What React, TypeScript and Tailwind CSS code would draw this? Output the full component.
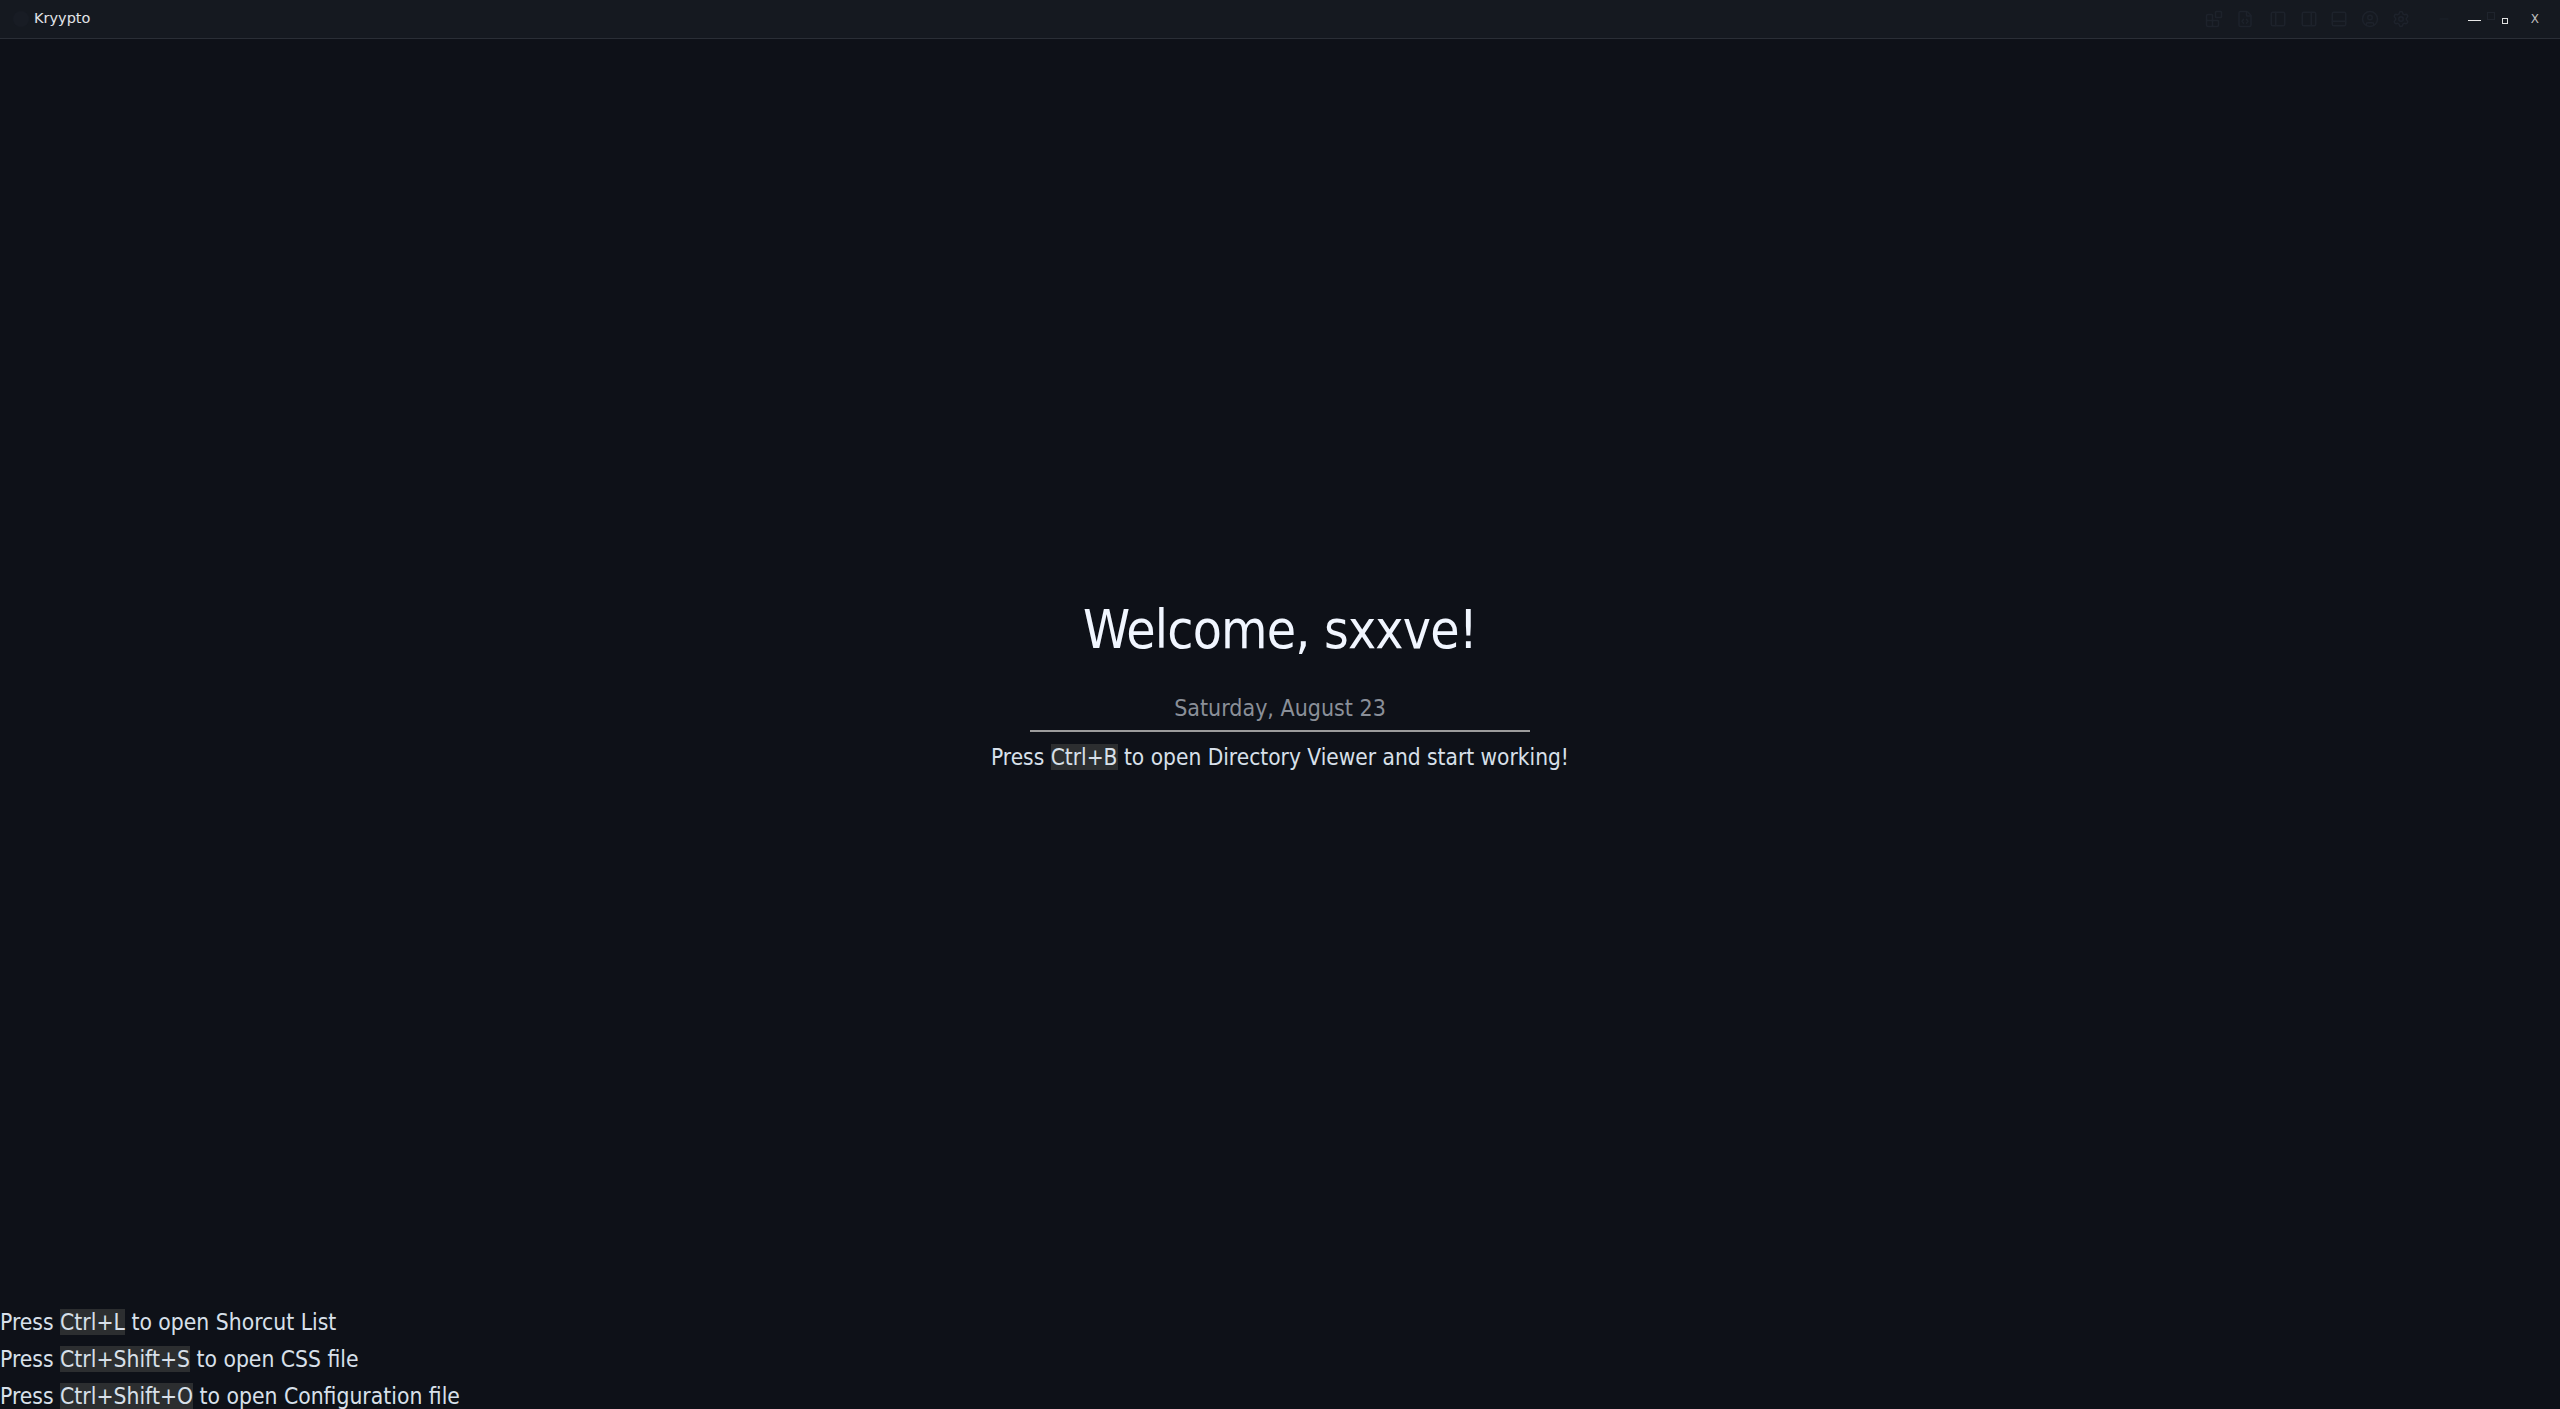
import React from "react";
import { CircleUser, Settings, Minus, Blocks, FileCode, PanelLeft, PanelRight, PanelBottom } from "lucide-react";

const font = "font-['DejaVu_Sans',sans-serif] font-stretch-condensed";

function Key({ children }: { children: React.ReactNode }) {
  return <span className="bg-[#2c2e30]">{children}</span>;
}

export default function App() {
  return (
    <div className={`w-[2560px] h-[1409px] bg-[#0e1118] flex flex-col overflow-hidden ${font}`}>
      <div className="h-[39px] bg-[#151920] border-b border-[#2a2e36] flex items-center shrink-0">
        <div className="w-[16px] h-[16px] ml-[13px] rounded-full bg-[#181c24]" />
        <span className="ml-[5px] text-[14.5px] text-[#e2e4e8] font-stretch-normal">Kryypto</span>
        <div className="flex-1" />
        <div className="flex items-center text-[#1d222b]">
          <Blocks size={18} className="mr-[13px]" />
          <FileCode size={18} className="mr-[15px]" />
          <PanelLeft size={18} className="mr-[13px]" />
          <PanelRight size={18} className="mr-[12px]" />
          <PanelBottom size={18} className="mr-[13px]" />
          <CircleUser size={18} className="mr-[13px]" />
          <Settings size={18} className="mr-[27px]" />
          <Minus size={14} className="mr-[17px]" />
        </div>
        <div className="flex items-center">
          <div className="w-[13px] h-[1px] bg-[#e8e8e8] mr-[6px] mt-[2px]" />
          <div className="w-[8px] h-[8px] border border-[#1f242d] mr-[7px] mb-[6px]" />
          <div className="w-[6px] h-[6px] border border-[#e0e0e0] mr-[23px] mt-[3px]" />
          <span className="text-[12px] text-[#bdbdbd] mr-[21px] font-stretch-normal">X</span>
        </div>
      </div>
      <div className="flex-1 flex flex-col items-center pt-[559px] text-[#d8e0ea]">
        <div className="text-[53px] leading-[64px] text-[#f1f6ff] tracking-[-0.8px] whitespace-nowrap">Welcome, sxxve!</div>
        <div className="text-[23px] leading-[28px] text-[#8a8f98] mt-[32px] whitespace-nowrap">Saturday, August 23</div>
        <div className="w-[500px] h-[2px] bg-[#9c9c9c] mt-[8px]" />
        <div className="text-[22.5px] leading-[28px] mt-[11px] whitespace-nowrap">
          Press <Key>Ctrl+B</Key> to open Directory Viewer and start working!
        </div>
        <div className="flex-1" />
        <div className="self-start text-[22.7px] leading-[37px] whitespace-nowrap mb-[-6px]">
          <div>Press <Key>Ctrl+L</Key> to open Shorcut List</div>
          <div>Press <Key>Ctrl+Shift+S</Key> to open CSS file</div>
          <div>Press <Key>Ctrl+Shift+O</Key> to open Configuration file</div>
        </div>
      </div>
    </div>
  );
}
